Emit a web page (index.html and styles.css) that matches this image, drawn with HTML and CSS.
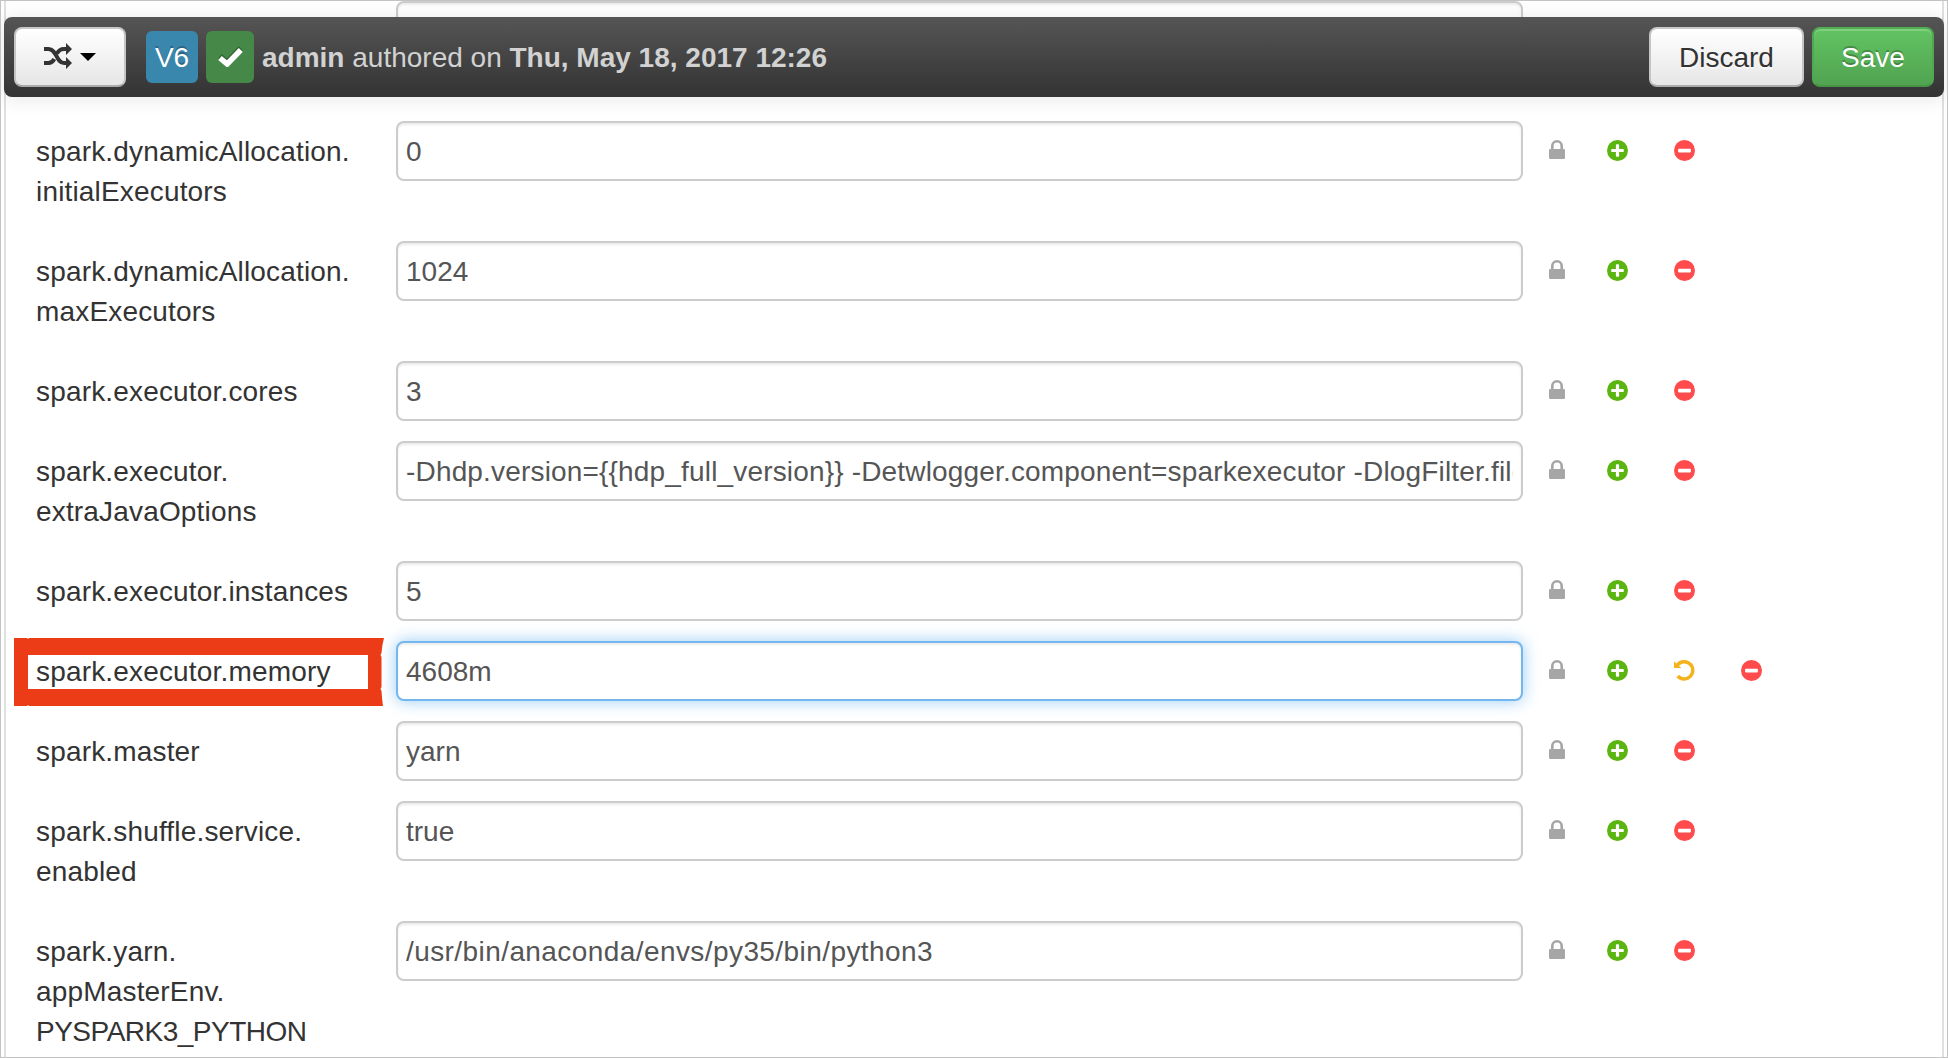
FILE: index.html
```
<!DOCTYPE html>
<html lang="en">
<head>
<meta charset="utf-8">
<title>Spark configuration</title>
<link rel="stylesheet" href="styles.css">
</head>
<body>
<svg class="sprite" aria-hidden="true">
  <symbol id="lock" viewBox="0 0 16 19"><path fill-rule="evenodd" d="M2 9V6a6 6 0 0 1 12 0v3h.8q1.2 0 1.2 1.2v7.6q0 1.2-1.200 1.200H1.200Q0 19 0 17.800v-7.600Q0 9 1.200 9zm2.600 0h6.800V6a3.400 3.400 0 0 0-6.800 0z"/></symbol>
  <symbol id="plus" viewBox="0 0 21 21"><path fill-rule="evenodd" d="M10.500 0a10.500 10.500 0 1 0 0 21a10.500 10.500 0 1 0 0-21zM9.700 4.200h1.600q.8 0 .8.800v3.900H16q.8 0 .8.800v1.600q0 .8-.8.800h-3.900V16q0 .8-.8.800H9.700q-.8 0-.8-.8v-3.900H5q-.8 0-.8-.8V9.700q0-.8.8-.8h3.900V5q0-.8.8-.8z"/></symbol>
  <symbol id="minus" viewBox="0 0 21 21"><path fill-rule="evenodd" d="M10.500 0a10.500 10.500 0 1 0 0 21a10.500 10.500 0 1 0 0-21zM4.900 8.800h11.200q.8 0 .8.800v2q0 .8-.8.800H4.900q-.8 0-.8-.8v-2q0-.8.8-.8z"/></symbol>
  <symbol id="undo" viewBox="0 0 21 21"><path d="M0 1.200 2.300 3.400A10.400 10.400 0 1 1 2.400 17.300L5 14.800A6.900 6.900 0 1 0 4.900 5.900L7.400 8H0z"/></symbol>
</svg>
<main class="page">
  <header class="toolbar">
    <button class="btn btn-versions" aria-label="Versions">
      <svg class="icon-shuffle" viewBox="0 0 28 26"><path d="M0 6H4.500C13 6 12 20 20 20H23M0 20H4.500C7.500 20 9 18.500 10.300 16M13 10.500C14.500 7.500 16.500 6 20 6H23" fill="none" stroke="#333" stroke-width="4"/><path d="M22 0 28 6 22 12zM22 14 28 20 22 26z" fill="#333"/></svg>
      <span class="caret"></span>
    </button>
    <span class="badge badge-version">V6</span>
    <span class="badge badge-current"><svg class="icon-check" viewBox="0 0 25 20"><path d="M2 11 9.200 17 22.800 3" fill="none" stroke="#fff" stroke-width="5.500"/></svg></span>
    <p class="author"><b>admin</b> authored on <b>Thu, May 18, 2017 12:26</b></p>
    <button class="btn btn-discard">Discard</button>
    <button class="btn btn-save">Save</button>
  </header>
  <form class="settings">
    <div class="row"><span class="name"><br><br></span><input class="value"></div>
    <div class="row"><label class="name">spark.dynamicAllocation.<br>initialExecutors</label><input class="value" value="0"><div class="actions"><svg class="lock"><use href="#lock"/></svg><svg class="plus"><use href="#plus"/></svg><svg class="minus"><use href="#minus"/></svg></div></div>
    <div class="row"><label class="name">spark.dynamicAllocation.<br>maxExecutors</label><input class="value" value="1024"><div class="actions"><svg class="lock"><use href="#lock"/></svg><svg class="plus"><use href="#plus"/></svg><svg class="minus"><use href="#minus"/></svg></div></div>
    <div class="row"><label class="name">spark.executor.cores</label><input class="value" value="3"><div class="actions"><svg class="lock"><use href="#lock"/></svg><svg class="plus"><use href="#plus"/></svg><svg class="minus"><use href="#minus"/></svg></div></div>
    <div class="row"><label class="name">spark.executor.<br>extraJavaOptions</label><input class="value value-options" value="-Dhdp.version={{hdp_full_version}} -Detwlogger.component=sparkexecutor -DlogFilter.file"><div class="actions"><svg class="lock"><use href="#lock"/></svg><svg class="plus"><use href="#plus"/></svg><svg class="minus"><use href="#minus"/></svg></div></div>
    <div class="row"><label class="name">spark.executor.instances</label><input class="value" value="5"><div class="actions"><svg class="lock"><use href="#lock"/></svg><svg class="plus"><use href="#plus"/></svg><svg class="minus"><use href="#minus"/></svg></div></div>
    <div class="row"><label class="name">spark.executor.memory</label><input class="value value-active" value="4608m"><div class="actions"><svg class="lock"><use href="#lock"/></svg><svg class="plus"><use href="#plus"/></svg><svg class="undo"><use href="#undo"/></svg><svg class="minus"><use href="#minus"/></svg></div>
      <svg class="marker" viewBox="0 0 370 68"><path fill-rule="evenodd" d="M0 0H13L14 1 15 0H370Q368 7 367.500 15L366.500 17 367.500 19V49L366.500 51 367.500 53Q368 61 369 68H15L14 67 13 68H0zM14 17V51H354V17z"/></svg></div>
    <div class="row"><label class="name">spark.master</label><input class="value" value="yarn"><div class="actions"><svg class="lock"><use href="#lock"/></svg><svg class="plus"><use href="#plus"/></svg><svg class="minus"><use href="#minus"/></svg></div></div>
    <div class="row"><label class="name">spark.shuffle.service.<br>enabled</label><input class="value" value="true"><div class="actions"><svg class="lock"><use href="#lock"/></svg><svg class="plus"><use href="#plus"/></svg><svg class="minus"><use href="#minus"/></svg></div></div>
    <div class="row"><label class="name">spark.yarn.<br>appMasterEnv.<br><span class="caps">PYSPARK3_PYTHON</span></label><input class="value value-path" value="/usr/bin/anaconda/envs/py35/bin/python3"><div class="actions"><svg class="lock"><use href="#lock"/></svg><svg class="plus"><use href="#plus"/></svg><svg class="minus"><use href="#minus"/></svg></div></div>
  </form>
</main>
</body>
</html>
```
FILE: styles.css
```
* { box-sizing: border-box; }
body {
  margin: 0;
  background: #fff;
  color: #333;
  font: 28px/40px "Liberation Sans", Arial, sans-serif;
}
.sprite { display: none; }
.page {
  position: relative;
  height: 1058px;
  padding: 0 3px;
  overflow: hidden;
  border: 1px solid #c3c3c3;
}

/* toolbar floating over the scrolled form */
.toolbar {
  position: absolute;
  z-index: 1;
  top: 16px;
  left: 3px;
  width: 1940px;
  height: 80px;
  padding: 0 10px;
  display: flex;
  align-items: center;
  border-radius: 8px;
  background: linear-gradient(#555, #333);
  box-shadow: 0 2px 20px rgba(0, 0, 0, .1);
  color: #d2d2d2;
}
.btn {
  height: 60px;
  padding: 2px 0 0;
  display: flex;
  align-items: center;
  justify-content: center;
  border: 2px solid #bbb;
  border-color: #c8c8c8 #c5c5c5 #aaa;
  border-radius: 8px;
  background: linear-gradient(#fff, #e6e6e6);
  box-shadow: inset 0 2px 0 rgba(255, 255, 255, .2);
  color: #333;
  font: inherit;
  text-shadow: 0 2px 2px rgba(255, 255, 255, .75);
}
.btn-versions { width: 112px; margin-right: 20px; gap: 8px; padding: 0; }
.icon-shuffle { width: 28px; height: 26px; margin-top: -2px; }
.caret {
  border: 8px solid transparent;
  border-top-color: #000;
  border-bottom: 0;
}
.badge {
  height: 52px;
  margin-right: 8px;
  display: flex;
  align-items: center;
  justify-content: center;
  border-radius: 6px;
  color: #fff;
  text-shadow: 0 -2px 0 rgba(0, 0, 0, .25);
}
.badge-version { width: 52px; padding-top: 2px; background: #3a87ad; }
.badge-current { width: 48px; background: #468847; }
.icon-check {
  width: 25px;
  height: 20px;
  filter: drop-shadow(0 -2px 0 rgba(0, 0, 0, .25));
}
.author { margin: 0 auto 0 0; padding-top: 2px; white-space: nowrap; }
.btn-discard { width: 155px; margin-right: 8px; }
.btn-save {
  width: 122px;
  border-color: #53ae53 #50a850 #469446;
  background: linear-gradient(#62c462, #51a351);
  color: #fff;
  text-shadow: 0 -2px 0 rgba(0, 0, 0, .25);
}

/* form */
.settings {
  min-height: 1056px;
  padding-left: 30px;
  border: solid #e0e0e0;
  border-width: 0 2px;
}
.row {
  position: relative;
  display: grid;
  grid-template-columns: 360px 1127px 1fr;
  align-items: start;
  padding-bottom: 20px;
}
.name { padding: 11px 0 9px; letter-spacing: .17px; }
.caps { letter-spacing: -.5px; }
.value {
  width: 100%;
  height: 60px;
  padding: 9px 8px 7px;
  border: 2px solid #ccc;
  border-radius: 8px;
  outline: 0;
  background: #fff;
  box-shadow: inset 0 2px 2px rgba(0, 0, 0, .075);
  color: #555;
  font: inherit;
}
.value-options { letter-spacing: .17px; }
.value-path { letter-spacing: .42px; }
.value-active {
  border-color: #74b7ee;
  box-shadow: inset 0 2px 2px rgba(0, 0, 0, .075), 0 0 16px rgba(82, 168, 236, .6);
}
.actions { display: flex; align-items: center; height: 59px; padding-left: 26px; }
.lock { width: 16px; height: 19px; margin: 0 42px 2px 0; fill: #a6a6a6; }
.plus, .minus, .undo { width: 21px; height: 21px; margin-right: 46px; }
.plus { fill: #5ab511; }
.undo { fill: #f5b31b; }
.minus { fill: #ff4b4b; }
.marker {
  position: absolute;
  left: -22px;
  top: -3px;
  width: 370px;
  height: 68px;
  fill: #eb3c17;
  pointer-events: none;
}
```
